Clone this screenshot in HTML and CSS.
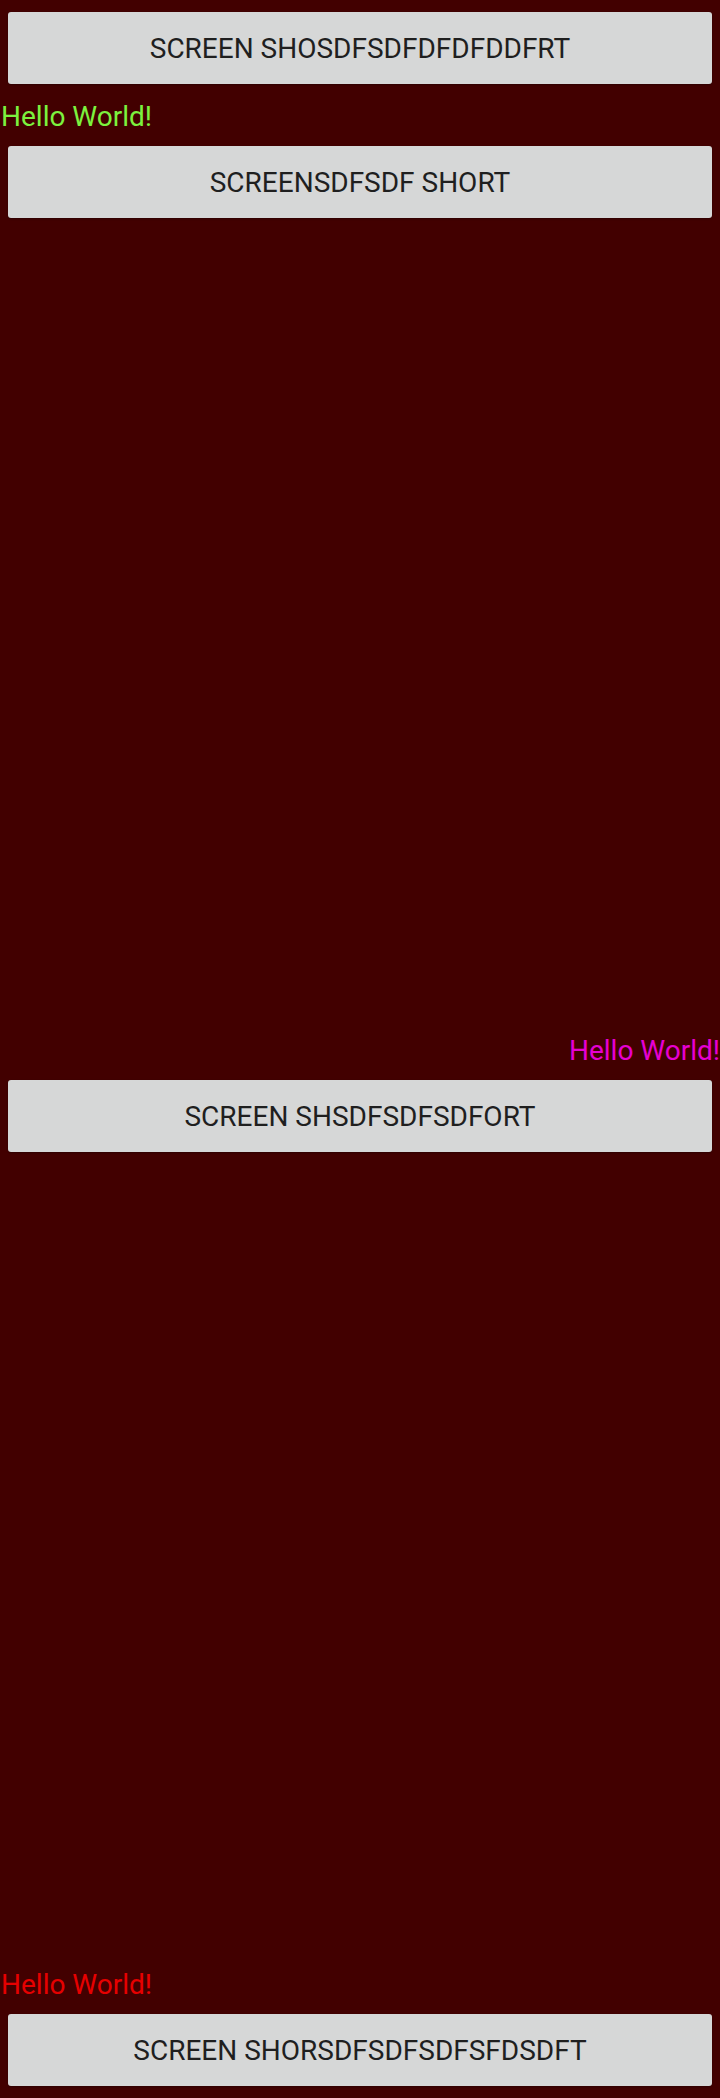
FILE: index.html
```html
<!DOCTYPE html>
<html>
<head>
<meta charset="utf-8">
<link rel="stylesheet" href="styles.css">
</head>
<body>
<div class="screen">
  <button class="btn">SCREEN SHOSDFSDFDFDFDDFRT</button>
  <div class="label label-green">Hello World!</div>
  <button class="btn">SCREENSDFSDF SHORT</button>
  <div class="spacer"></div>
  <div class="label label-magenta">Hello World!</div>
  <button class="btn">SCREEN SHSDFSDFSDFORT</button>
  <div class="spacer"></div>
  <div class="label label-red">Hello World!</div>
  <button class="btn">SCREEN SHORSDFSDFSDFSFDSDFT</button>
</div>
</body>
</html>
```
FILE: styles.css
```css
html, body {
  margin: 0;
  padding: 0;
  background: #420000;
}
.screen {
  height: 2098px;
  display: flex;
  flex-direction: column;
  font-family: Roboto, "Liberation Sans", sans-serif;
}
.btn {
  flex: none;
  margin: 12px 8px;
  height: 72px;
  border: none;
  border-radius: 3px;
  background: #d6d7d7;
  color: #1f1f1f;
  font-family: Roboto, "Liberation Sans", sans-serif;
  font-weight: 400;
  font-size: 28px;
  letter-spacing: 0;
  padding: 0;
  box-shadow: 0 1px 2px rgba(0,0,0,0.3);
}
.label {
  flex: none;
  height: 34px;
  padding-top: 4px;
  line-height: 34px;
  font-size: 28px;
  font-weight: 400;
  white-space: nowrap;
}
.label-green { color: #7cf23e; padding-left: 1px; }
.label-magenta { color: #e600d2; text-align: right; }
.label-red { color: #e60000; padding-left: 1px; }
.spacer { flex: 1; }
```
